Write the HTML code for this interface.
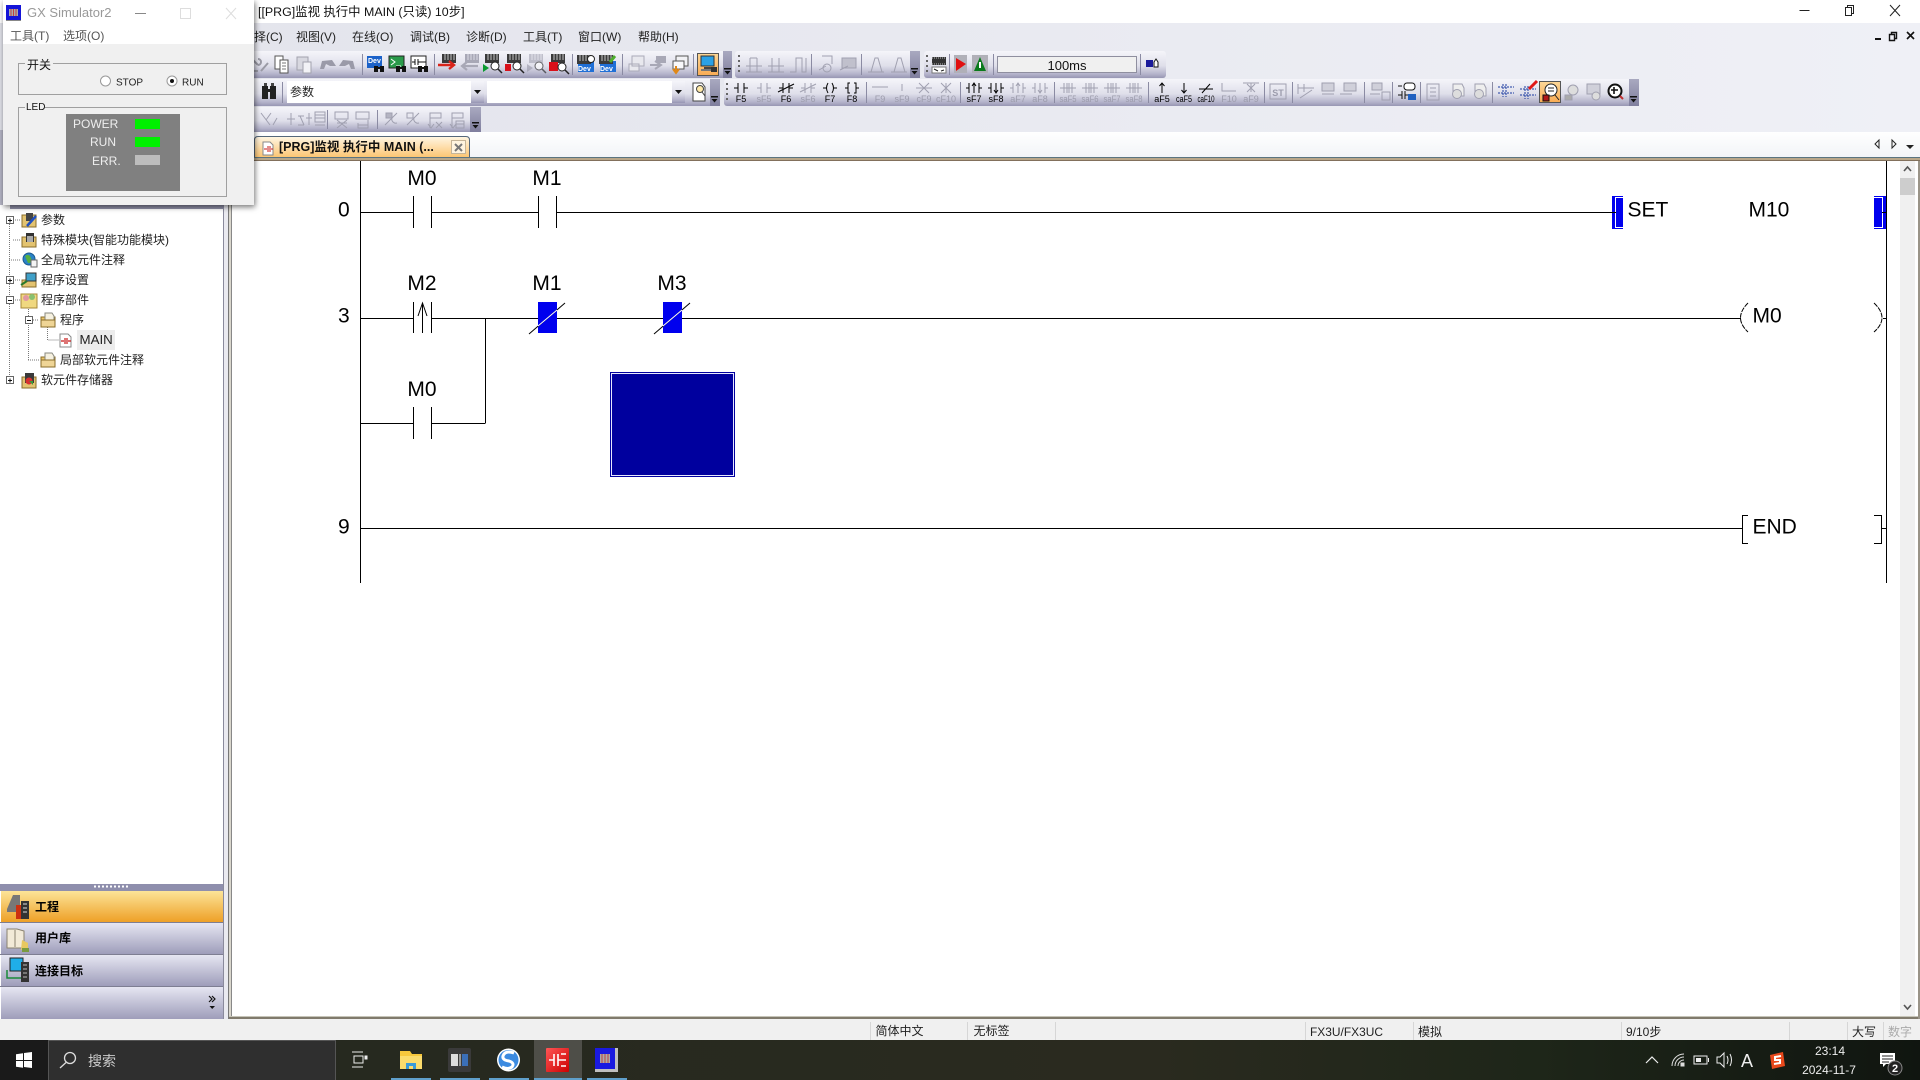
<!DOCTYPE html>
<html><head><meta charset="utf-8"><title>GX Works2</title>
<style>
html,body{margin:0;padding:0;width:1920px;height:1080px;overflow:hidden;background:#fff}
svg{display:block;font-family:"Liberation Sans","Noto Sans CJK SC",sans-serif}
.t{font-size:12px;fill:#222}
.lad{font-size:21px;fill:#000}
.k{stroke:#000;fill:none;stroke-width:1}
.g{stroke:#a0a0b0;fill:none;stroke-width:1}
.fk{font-size:9px;fill:#000;text-anchor:middle}
.fg{font-size:9px;fill:#9c9cac;text-anchor:middle}
.sep{stroke:#8b8ba3;stroke-width:1}
.ln{stroke:#000;stroke-width:1;fill:none;shape-rendering:crispEdges}
.st{font-size:12px;fill:#222}
.tree{font-size:12px;fill:#222}
.dot{stroke:#777;stroke-width:1;stroke-dasharray:1 1;fill:none;shape-rendering:crispEdges}
</style></head><body>
<svg width="1920" height="1080" viewBox="0 0 1920 1080" xmlns="http://www.w3.org/2000/svg">
<defs>
<linearGradient id="bg" x1="0" x2="1" y1="0" y2="0"><stop offset="0" stop-color="#e2e3eb"/><stop offset="1" stop-color="#eff0f6"/></linearGradient>
<linearGradient id="tb" x1="0" x2="0" y1="0" y2="1"><stop offset="0" stop-color="#f5f5fa"/><stop offset=".55" stop-color="#dfdfea"/><stop offset=".85" stop-color="#b5b4cb"/><stop offset="1" stop-color="#9796b3"/></linearGradient>
<linearGradient id="gr" x1="0" x2="0" y1="0" y2="1"><stop offset="0" stop-color="#a9a9c0"/><stop offset="1" stop-color="#7f7e9d"/></linearGradient>
<linearGradient id="strip" x1="0" x2="0" y1="0" y2="1"><stop offset="0" stop-color="#fff"/><stop offset="1" stop-color="#f2f4f7"/></linearGradient>
<linearGradient id="tab" x1="0" x2="0" y1="0" y2="1"><stop offset="0" stop-color="#fff6e4"/><stop offset="1" stop-color="#fcc674"/></linearGradient>
<linearGradient id="acc" x1="0" x2="0" y1="0" y2="1"><stop offset="0" stop-color="#e6e6f2"/><stop offset="1" stop-color="#9e9dba"/></linearGradient>
<linearGradient id="acco" x1="0" x2="0" y1="0" y2="1"><stop offset="0" stop-color="#fce498"/><stop offset="1" stop-color="#eea027"/></linearGradient>
<linearGradient id="hl" x1="0" x2="0" y1="0" y2="1"><stop offset="0" stop-color="#fcd797"/><stop offset="1" stop-color="#f9ab54"/></linearGradient>
<linearGradient id="task" x1="0" x2="1" y1="0" y2="0"><stop offset="0" stop-color="#1a1a1a"/><stop offset=".18" stop-color="#26291f"/><stop offset=".6" stop-color="#2a2a1f"/><stop offset=".8" stop-color="#1e2619"/><stop offset="1" stop-color="#101510"/></linearGradient>
<linearGradient id="red" x1="0" x2="1" y1="0" y2="1"><stop offset="0" stop-color="#f55"/><stop offset="1" stop-color="#c00"/></linearGradient>

<path id="ct" d="M-7 0H-3M-3-5V5M3-5V5M3 0H7"/>
<path id="nc" d="M-7 0H-3M-3-5V5M3-5V5M3 0H7M-8 4L8-4"/>
<path id="co" d="M-7 0H-4M-2-5Q-5 0-2 5M2-5Q5 0 2 5M4 0H7"/>
<path id="ap" d="M-7 0H-4M-2-5H-4V5H-2M2-5H4V5H2M4 0H7"/>
<path id="up" d="M-8 0H-5M-5-5V5M5-5V5M5 0H8M0 5V-5M-2-2L0-5L2-2"/>
<path id="dn" d="M-8 0H-5M-5-5V5M5-5V5M5 0H8M0-5V5M-2 2L0 5L2 2"/>
<path id="sa" d="M-8 0H8M-4-5V5M4-5V5M-1-5V5M1-5V5"/>
<g id="p"><rect x="-7" y="-8" width="14" height="9" fill="#3a3a3a"/><path d="M-4-8V-2M-1-8V-2M2-8V-2M5-8V-2" stroke="#c4c4c4" fill="none"/></g>
<g id="pg"><rect x="-7" y="-8" width="14" height="9" fill="#a8a8b6"/><path d="M-4-8V-2M-1-8V-2M2-8V-2M5-8V-2" stroke="#dcdce6" fill="none"/></g>
<g id="mg"><circle r="4" fill="#fff" stroke="#222"/><path d="M3 3L7 7" stroke="#222" stroke-width="1.5"/></g>
<g id="bn"><rect x="-5" y="1" width="4" height="6" fill="#111"/><rect x="1" y="1" width="4" height="6" fill="#111"/><rect x="-1" y="2" width="2" height="2" fill="#111"/></g>
<path id="wr" d="M-8-5l6 6M-2-5a3 3 0 0 1 0 6M1 7L8-1M-8 7h6"/>
<g id="fold"><path d="M-7-3H7V7H-7Z" fill="#e8c46a" stroke="#8a6d2a"/><path d="M-3-7H4L6-4V4H-3Z" fill="#f6f1e0" stroke="#8a8a80"/><path d="M-7 0H7V7H-7Z" fill="#efd596" stroke="#8a6d2a"/></g>
</defs>

<!-- top -->
<rect width="1920" height="1080" fill="#fff"/>
<rect x="0" y="23" width="1920" height="109" fill="url(#bg)"/>
<rect x="0" y="132" width="1920" height="25" fill="url(#strip)"/>
<text x="258" y="16" font-size="12.4" fill="#111">[[PRG]监视 执行中 MAIN (只读) 10步]</text>

<!-- window controls -->
<path d="M1799.5 10.5H1809.5" stroke="#222"/>
<path d="M1845.5 7.5H1851.5V15.5H1845.5ZM1847.5 7.5V5.5H1853.5V13.5H1851.5" stroke="#222" fill="none"/>
<path d="M1890 5L1900 16M1900 5L1890 16" stroke="#222" fill="none"/>
<rect x="1875" y="38" width="6" height="2" fill="#111"/>
<path d="M1889.5 34.5H1894.5V40.5H1889.5ZM1891.5 34.5V32.5H1896.5V38.5H1894.5" stroke="#111" fill="none" stroke-width="1.4"/>
<path d="M1907 32L1914 39M1914 32L1907 39" stroke="#111" stroke-width="1.6"/>

<!-- menu -->
<g class="t">
<text x="242" y="41">选择(C)</text><text x="296" y="41">视图(V)</text><text x="352" y="41">在线(O)</text><text x="410" y="41">调试(B)</text><text x="466" y="41">诊断(D)</text><text x="523" y="41">工具(T)</text><text x="578" y="41">窗口(W)</text><text x="638" y="41">帮助(H)</text>
</g>

<!-- toolbar backgrounds -->
<rect x="250" y="51" width="482" height="27" rx="3" fill="url(#tb)"/><rect x="723" y="51" width="9" height="27" fill="url(#gr)"/>
<rect x="735" y="51" width="185" height="27" rx="3" fill="url(#tb)"/><rect x="910" y="51" width="10" height="27" fill="url(#gr)"/>
<rect x="924" y="51" width="242" height="27" rx="3" fill="url(#tb)"/>
<rect x="250" y="79" width="470" height="27" rx="3" fill="url(#tb)"/><rect x="710" y="79" width="10" height="27" fill="url(#gr)"/>
<rect x="724" y="79" width="915" height="27" rx="3" fill="url(#tb)"/><rect x="1629" y="79" width="10" height="27" fill="url(#gr)"/>
<rect x="250" y="107" width="231" height="25" rx="3" fill="url(#tb)"/><rect x="470" y="107" width="11" height="25" fill="url(#gr)"/>

<!-- dropdown marks -->
<g fill="#111"><path d="M724 68h7v1.5h-7ZM724.5 71h6l-3 3.5Z"/><path d="M911 68h7v1.5h-7ZM911.5 71h6l-3 3.5Z"/><path d="M711 96h7v1.5h-7ZM711.5 99h6l-3 3.5Z"/><path d="M1630 96h7v1.5h-7ZM1630.5 99h6l-3 3.5Z"/><path d="M472 124h7v1.5h-7ZM472.5 127h6l-3 3.5Z" transform="translate(0,-2)"/></g>

<!-- row 1 icons -->
<g>
<use href="#wr" x="260" y="64" stroke="#9a9aa5" stroke-width="2" fill="none"/>
<g transform="translate(282,64)"><path d="M-7-8H1V5H-7Z" fill="#fff" stroke="#555"/><path d="M-2-4H6V9H-2Z" fill="#fff" stroke="#555"/><path d="M0-1H4M0 2H4M0 5H4" stroke="#777"/></g>
<g transform="translate(304,64)"><path d="M-7-7H4V6H-7Z" fill="#d8d8e0" stroke="#a2a2ae"/><path d="M-1-2H7V9H-1Z" fill="#f2f2f6" stroke="#a2a2ae"/></g>
<path d="M320 69L322 61L332 60L336 66L330 66L326 64L324 69Z" fill="#9a9aa8"/>
<path d="M355 69L353 61L343 60L339 66L345 66L349 64L351 69Z" fill="#9a9aa8"/>
<line x1="362.5" x2="362.5" y1="54" y2="75" class="sep"/>
<g transform="translate(376,64)"><rect x="-9" y="-8" width="15" height="12" fill="#1c62c9"/><text x="-8" y="-1" font-size="7" fill="#fff" font-weight="bold">Dev</text><use href="#bn" x="3" y="1"/></g>
<g transform="translate(398,64)"><rect x="-9" y="-8" width="15" height="12" fill="#2a9a4a" stroke="#222"/><path d="M-7-5L-3-2L-7 1M-2 2H3" stroke="#fff" fill="none"/><use href="#bn" x="3" y="1"/></g>
<g transform="translate(420,64)"><rect x="-9" y="-8" width="15" height="12" fill="#fff" stroke="#222"/><path d="M-8-2H-5M-5-5V1M-2-5V1M-2-2H6" stroke="#111" fill="none"/><use href="#bn" x="3" y="1"/></g>
<line x1="434.5" x2="434.5" y1="54" y2="75" class="sep"/>
<g transform="translate(449,62)"><use href="#p"/><path d="M-11 3H4M0-1L5 3L0 7" stroke="#d9241a" stroke-width="2.4" fill="none"/></g>
<g transform="translate(472,62)"><use href="#pg"/><path d="M6 4H-9M-5 0L-10 4L-5 8" stroke="#a8a8b6" stroke-width="2.2" fill="none"/></g>
<g transform="translate(492,62)"><use href="#p"/><path d="M-9 2L-3 6L-9 10Z" fill="#0a9a30"/><use href="#mg" x="3" y="4"/></g>
<g transform="translate(514,62)"><use href="#p"/><rect x="-9" y="2" width="6" height="7" fill="#d9101a"/><use href="#mg" x="3" y="4"/></g>
<g transform="translate(536,62)" opacity=".65"><use href="#pg"/><path d="M-9 2L-3 6L-9 10Z" fill="#9c9cac"/><use href="#mg" x="3" y="4"/></g>
<g transform="translate(558,62)"><use href="#p"/><rect x="-9" y="0" width="9" height="9" fill="#d9101a"/><use href="#mg" x="4" y="5"/></g>
<line x1="572.5" x2="572.5" y1="54" y2="75" class="sep"/>
<g transform="translate(586,62)"><rect x="-8" y="-1" width="16" height="11" fill="#1f6fd6"/><use href="#p" y="1" x="-2"/><circle cx="5" cy="-3" r="3.5" fill="#fff" stroke="#222"/><text x="-8" y="9" font-size="7" fill="#fff" font-weight="bold">Dev</text></g>
<g transform="translate(608,62)"><rect x="-8" y="-1" width="16" height="11" fill="#1f6fd6"/><use href="#p" y="1" x="-2"/><path d="M2 0L7-6" stroke="#4fae2e" stroke-width="3"/><text x="-8" y="9" font-size="7" fill="#fff" font-weight="bold">Dev</text></g>
<line x1="622.5" x2="622.5" y1="54" y2="75" class="sep"/>
<g transform="translate(637,64)" stroke="#aaaab8" fill="none"><path d="M-5-8H7V2H-5ZM-8 0H2V7H-8Z" fill="#e8e8ee"/></g>
<g transform="translate(658,64)"><rect x="-2" y="-8" width="10" height="7" fill="#a8a8b6"/><path d="M-8 1H2M-3-3L3 1L-3 5" stroke="#a8a8b6" stroke-width="2" fill="none"/></g>
<g transform="translate(680,64)"><path d="M-4-8H8V2H-4Z" fill="#f2f2f5" stroke="#555"/><path d="M-7-3H4V5H-7Z" fill="#f8f8fa" stroke="#555"/><path d="M-4 2V8M-7 5L-4 9L-1 5" stroke="#e08818" stroke-width="2" fill="none"/></g>
<line x1="693.5" x2="693.5" y1="54" y2="75" class="sep"/>
<rect x="697.5" y="53.5" width="21" height="22" fill="url(#hl)" stroke="#555"/>
<g transform="translate(708,64)"><rect x="-7" y="-8" width="13" height="10" fill="#2aa1e6" stroke="#333"/><rect x="-4" y="3" width="7" height="2" fill="#444"/><rect x="-7" y="5" width="13" height="2" fill="#777"/><rect x="3" y="3" width="6" height="5" fill="#333"/></g>
</g>

<!-- row1 tb2 -->
<g fill="#666"><rect x="738" y="55" width="2" height="2"/><rect x="738" y="60" width="2" height="2"/><rect x="738" y="65" width="2" height="2"/><rect x="738" y="70" width="2" height="2"/></g>
<g stroke="#a0a0b0" fill="none">
<path d="M746 72H762M750 72V58M757 72V58M750 58L757 58M746 66H762"/><path d="M768 72H784M772 72V58M779 72V58M768 66H784"/><path d="M790 72H796V58H802V72H806V58"/><path d="M822 56H832V64M819 70L826 66"/><circle cx="827" cy="68" r="4"/><rect x="842" y="58" width="14" height="10" fill="#c0c0cc"/><path d="M840 70L848 66"/><path d="M868 72H884M871 72L875 58H878L882 72"/><path d="M891 72H907M894 72L898 58H901L905 72"/>
</g>
<line x1="811.5" x2="811.5" y1="54" y2="75" class="sep"/><line x1="861.5" x2="861.5" y1="54" y2="75" class="sep"/>

<!-- row1 tb3 -->
<g fill="#666"><rect x="926" y="55" width="2" height="2"/><rect x="926" y="60" width="2" height="2"/><rect x="926" y="65" width="2" height="2"/><rect x="926" y="70" width="2" height="2"/></g>
<rect x="932" y="57" width="14" height="8" fill="#333"/><path d="M932 58H946M932 64H946" stroke="#bbb" stroke-dasharray="1 1"/><path d="M932 67H946V73H932Z" fill="#fff" stroke="#777"/><path d="M934 69L938 71M941 71L944 70" stroke="#222"/>
<line x1="949.5" x2="949.5" y1="54" y2="75" class="sep"/>
<rect x="954" y="55" width="13" height="18" fill="#b0b0b8"/><path d="M956 58L966 64L956 71Z" fill="#e01010"/>
<rect x="972" y="55" width="16" height="18" fill="#b0b0b8"/><path d="M980 57L986 71H974Z" fill="#0a7a1c"/><rect x="979" y="62" width="2" height="6" fill="#fff"/>
<line x1="993.5" x2="993.5" y1="54" y2="75" class="sep"/>
<rect x="997.5" y="56.5" width="139" height="16" fill="#f0f0f0" stroke="#8f8f9f"/>
<text x="1067" y="70" font-size="13" fill="#111" text-anchor="middle">100ms</text>
<line x1="1140.5" x2="1140.5" y1="54" y2="75" class="sep"/>
<rect x="1146" y="60" width="7" height="7" fill="#1a1a9a"/><path d="M1154 67V62l2-3 2 3v5Z" fill="#fff" stroke="#111"/>

<!-- row2 left -->
<g transform="translate(269,92)"><rect x="-7" y="-6" width="6" height="13" fill="#222"/><rect x="1" y="-6" width="6" height="13" fill="#222"/><rect x="-1" y="-3" width="2" height="3" fill="#222"/><rect x="-5" y="-9" width="3" height="3" fill="#444"/><rect x="2" y="-9" width="3" height="3" fill="#444"/></g>
<line x1="282.5" x2="282.5" y1="82" y2="103" class="sep"/>
<rect x="287" y="81" width="197" height="22" fill="#fff"/><rect x="471" y="81" width="13" height="22" fill="url(#tb)"/><path d="M474 90h7l-3.5 4Z" fill="#111"/>
<text x="290" y="96" class="t" font-size="12">参数</text>
<rect x="487" y="81" width="198" height="22" fill="#fff"/><rect x="672" y="81" width="13" height="22" fill="url(#tb)"/><path d="M675 90h7l-3.5 4Z" fill="#111"/>
<g transform="translate(699,92)"><path d="M-6-9H3L6-5V9H-6Z" fill="#fff" stroke="#444"/><circle cx="1" cy="-3" r="3.5" fill="#ffe9a8" stroke="#444"/><path d="M3 0L6 4" stroke="#444"/></g>

<!-- row2 f keys -->
<g fill="#666"><rect x="726" y="83" width="2" height="2"/><rect x="726" y="88" width="2" height="2"/><rect x="726" y="93" width="2" height="2"/><rect x="726" y="98" width="2" height="2"/></g>
<g class="k">
<use href="#ct" x="741" y="88"/><use href="#nc" x="786" y="88"/><use href="#co" x="830" y="88"/><use href="#ap" x="852" y="88"/>
<use href="#up" x="974" y="88"/><use href="#dn" x="996" y="88"/>
<path d="M1162 93V83M1159.5 86L1162 83L1164.5 86M1184 83V93M1181.5 90L1184 93L1186.5 90M1199 89H1213M1202 93L1210 84"/>
</g>
<g class="g">
<use href="#ct" x="764" y="88"/><use href="#nc" x="808" y="88"/>
<path d="M872 87H888M902 84V91M916 88H932M919 83L929 93M929 83L919 93M941 83L951 93M951 83L941 93M946 83V93"/>
<use href="#up" x="1018" y="88"/><use href="#dn" x="1040" y="88"/>
<use href="#sa" x="1068" y="88"/><use href="#sa" x="1090" y="88"/><use href="#sa" x="1112" y="88"/><use href="#sa" x="1134" y="88"/>
<path d="M1222 83V91H1236M1243 83H1259M1247 84L1255 92M1255 84L1247 92M1251 83V92"/>
<rect x="1270" y="84" width="16" height="15"/>
<path d="M1298 84V94M1304 84V92M1298 88H1314M1300 98L1312 90M1322 94H1334M1340 94H1352"/>
<rect x="1322" y="83" width="12" height="8" fill="#d0d0da"/><rect x="1344" y="83" width="12" height="8" fill="#d0d0da"/>
<rect x="1372" y="83" width="10" height="7" fill="#d0d0da"/><path d="M1370 94H1380M1382 92H1390V100H1382Z"/>
<path d="M1427 84H1439V100H1427ZM1430 88H1436M1430 92H1436M1430 96H1436"/>
<path d="M1453 84H1462L1464 88V96H1453Z" fill="#eee"/><path d="M1475 84H1484L1486 88V96H1475Z" fill="#eee"/>
<circle cx="1457" cy="94" r="4.5" fill="#ddd"/><circle cx="1479" cy="94" r="4.5" fill="#ddd"/>
<circle cx="1573" cy="90" r="5" fill="#ddd"/><path d="M1565 100V95H1572V100Z" fill="#aaa"/>
<rect x="1587" y="84" width="13" height="10" fill="#d0d0da"/><circle cx="1596" cy="96" r="4" fill="#ddd"/>
</g>
<g>
<text class="fk" x="741" y="102">F5</text><text class="fg" x="764" y="102">sF5</text><text class="fk" x="786" y="102">F6</text><text class="fg" x="808" y="102">sF6</text><text class="fk" x="830" y="102">F7</text><text class="fk" x="852" y="102">F8</text>
<text class="fg" x="880" y="102">F9</text><text class="fg" x="902" y="102">sF9</text><text class="fg" x="924" y="102">cF9</text><text class="fg" x="946" y="102">cF10</text>
<text class="fk" x="974" y="102">sF7</text><text class="fk" x="996" y="102">sF8</text><text class="fg" x="1018" y="102">aF7</text><text class="fg" x="1040" y="102">aF8</text>
<text class="fg" x="1068" y="102" textLength="17" lengthAdjust="spacingAndGlyphs">saF5</text><text class="fg" x="1090" y="102" textLength="17" lengthAdjust="spacingAndGlyphs">saF6</text><text class="fg" x="1112" y="102" textLength="17" lengthAdjust="spacingAndGlyphs">saF7</text><text class="fg" x="1134" y="102" textLength="17" lengthAdjust="spacingAndGlyphs">saF8</text>
<text class="fk" x="1162" y="102">aF5</text><text class="fk" x="1184" y="102" textLength="16" lengthAdjust="spacingAndGlyphs">caF5</text><text class="fk" x="1206" y="102" textLength="17" lengthAdjust="spacingAndGlyphs">caF10</text><text class="fg" x="1229" y="102">F10</text><text class="fg" x="1251" y="102">aF9</text>
<text x="1278" y="96" font-size="9" fill="#9c9cac" text-anchor="middle" font-weight="bold">ST</text>
</g>
<path d="M866.5 82V103M960.5 82V103M1054.5 82V103M1148.5 82V103M1264.5 82V103M1292.5 82V103M1364.5 82V103M1392.5 82V103M1420.5 82V103M1492.5 82V103" class="sep"/>
<g transform="translate(1406,92)"><rect x="-2" y="-9" width="11" height="7" rx="3" fill="#fff" stroke="#111"/><path d="M-8 3H-4M-4-1V7M-1-1V7M-1 3H2M-8-6H-4" stroke="#111" fill="none"/><rect x="2" y="2" width="8" height="6" fill="#2060c0"/></g>
<g stroke="#1a3aa0" fill="none" stroke-dasharray="2 1"><path d="M1498 87H1514M1498 93H1514M1503 84V90M1506 84V90M1503 90V97M1506 90V97"/><path d="M1520 89H1536M1520 95H1536M1525 86V92M1528 86V92M1525 92V99M1528 92V99"/></g>
<path d="M1529 89L1537 81" stroke="#e01818" stroke-width="3"/>
<rect x="1539.5" y="81.5" width="21" height="21" fill="url(#hl)" stroke="#555"/>
<circle cx="1551" cy="90" r="6" fill="#fff" stroke="#222"/><path d="M1548 88H1554M1548 91H1554M1555 95L1559 100" stroke="#222"/><rect x="1543" y="95" width="6" height="6" fill="#b01818" stroke="#111"/>
<circle cx="1615" cy="91" r="6.5" fill="#fff" stroke="#111" stroke-width="2"/><path d="M1611 90H1618M1614 87V94" stroke="#111" stroke-width="1.6"/><path d="M1620 96L1623 99" stroke="#c03030" stroke-width="2"/>

<!-- row3 -->
<g class="g">
<path d="M261 113L270 125M271 113L266 120M273 125L277 118M291 113V125M287 119H295M298 116H304M298 125H304M300 116L304 125"/>
<path d="M309 113V125M306 118H312M315 112H325V122H315ZM315 115H325M315 118H325M315 125H325"/>
<rect x="335" y="112" width="13" height="7"/><path d="M337 123H347M337 120L347 128M347 120L337 128"/>
<rect x="356" y="112" width="13" height="7"/><path d="M358 123V128H368V120M358 125H368"/>
<rect x="386" y="113" width="6" height="5" fill="#b4b4c2"/><path d="M385 125L397 113M392 118a4 4 0 0 0 5 5"/>
<rect x="407" y="113" width="6" height="5"/><path d="M407 125L419 113M414 118a4 4 0 0 0 5 5"/>
<path d="M430 113H441V118H430ZM430 113V128M428 124L431 128L434 124M436 122L442 128M442 122L436 128"/>
<path d="M452 113H463V118H452ZM452 113V128M450 124L453 128L456 124M456 121H464V128H456ZM456 124H464"/>
</g>
<path d="M327.5 110V129M377.5 110V129" class="sep"/>

<!-- tab -->
<path d="M254.5 157V140Q254.5 136.5 258 136.5H466Q469.5 136.5 469.5 140V157" fill="url(#tab)" stroke="#54677a"/>
<path d="M263 142H270L273 145V155H263Z" fill="#fff" stroke="#888"/><path d="M264 149H267M268 146V152M270 146V152M271 149H273" stroke="#c81818"/>
<text x="279" y="151" font-size="12.5" font-weight="bold" fill="#111">[PRG]监视 执行中 MAIN (...</text>
<rect x="451.5" y="140.5" width="14" height="13" fill="#fff4df" stroke="#c6b598"/><path d="M455 144L462 151M462 144L455 151" stroke="#777" stroke-width="2"/>
<path d="M1879 140V148L1875 144ZM1892 140V148L1896 144Z" fill="none" stroke="#222"/>
<path d="M1906 145H1914L1910 149Z" fill="#222"/>

<!-- status & below -->
<rect x="0" y="1019" width="1920" height="21" fill="#f0f0f0"/>

<!-- editor frame -->
<rect x="224" y="161" width="5" height="858" fill="#eaeaf0"/>
<rect x="229" y="157" width="1691" height="4" fill="#b8a688"/>
<rect x="229" y="157" width="1691" height="1" fill="#5a7480"/>
<rect x="229" y="160" width="1691" height="1" fill="#82705c"/>
<rect x="228" y="161" width="1" height="858" fill="#777"/>
<rect x="229" y="161" width="2" height="858" fill="#d9d6cc"/>
<rect x="231" y="161" width="1" height="855" fill="#888"/>
<rect x="229" y="1016" width="1691" height="1" fill="#c6c4b8"/>
<rect x="229" y="1017" width="1691" height="2" fill="#807a6c"/>
<rect x="1918" y="161" width="2" height="858" fill="#9a9488"/>
<rect x="1900" y="161" width="15" height="855" fill="#f0f0f0"/>
<rect x="1900" y="178" width="15" height="17" fill="#cdcdcd"/>
<path d="M1904 171L1907.5 167L1911 171" stroke="#555" stroke-width="1.6" fill="none"/>
<path d="M1904 1005L1907.5 1009L1911 1005" stroke="#555" stroke-width="1.6" fill="none"/>

<!-- ladder -->
<g>
<path class="ln" d="M360.5 161V583M1886.5 161V583"/>
<path class="ln" d="M360 212.5H413M431 212.5H538M556 212.5H1612M413.5 196V228M431.5 196V228M538.5 196V228M556.5 196V228"/>
<path class="ln" d="M360 318.5H413M431 318.5H538M557 318.5H663M682 318.5H1741M413.5 302V333M431.5 302V333M422.5 303V333M485.5 318V423.5M360 423.5H413M431 423.5H485M413.5 407V439M431.5 407V439"/>
<path d="M418 316L422.5 303L427 316" stroke="#000" fill="none"/>
<path class="ln" d="M360 528.5H1742M1748 515.5H1742.5V543.5H1748M1874 515.5H1881.5V543.5H1874M1881 528.5H1886"/>
<rect x="538" y="302" width="19" height="31" fill="#0000ee"/>
<path d="M529 334L565 303" stroke="#000" fill="none"/><path d="M538 326L557 310" stroke="#fff" fill="none"/>
<rect x="663" y="302" width="19" height="31" fill="#0000ee"/>
<path d="M654 334L690 303" stroke="#000" fill="none"/><path d="M663 326L682 310" stroke="#fff" fill="none"/>
<rect x="610" y="372" width="125" height="105" fill="#00009e"/>
<rect x="611.5" y="373.5" width="122" height="102" fill="none" stroke="#e8e8ff" shape-rendering="crispEdges"/>
<rect x="1612" y="196" width="11" height="33" fill="#0000ee"/>
<path d="M1623 197.5H1615.5V227.5H1623" stroke="#fff" fill="none" shape-rendering="crispEdges"/>
<path class="ln" d="M1612 212.5H1616"/>
<rect x="1874" y="196" width="12" height="33" fill="#0000ee"/>
<path d="M1874 197.5H1882.5V227.5H1874" stroke="#fff" fill="none" shape-rendering="crispEdges"/>
<path class="ln" d="M1882 212.5H1886"/>
<path d="M1748 303Q1733 318 1748 332" stroke="#000" fill="none" stroke-dasharray="5 1"/>
<path d="M1874 303Q1890 318 1874 332" stroke="#000" fill="none" stroke-dasharray="5 1"/>
<path class="ln" d="M1883 318.5H1886"/>
<g class="lad" text-anchor="middle">
<text x="422" y="185">M0</text><text x="547" y="185">M1</text>
<text x="422" y="290">M2</text><text x="547" y="290">M1</text><text x="672" y="290">M3</text>
<text x="422" y="396">M0</text>
</g>
<g class="lad">
<text x="338" y="216.500">0</text><text x="338" y="322.500">3</text><text x="338" y="533.500">9</text>
<text x="1627.500" y="216.500">SET</text><text x="1748.500" y="216.500">M10</text>
<text x="1752.500" y="322.500">M0</text><text x="1752.500" y="533.500">END</text>
</g>
</g>

<!-- left panel -->
<rect x="0" y="205" width="223" height="679" fill="#fff"/>
<rect x="223" y="161" width="1" height="858" fill="#8a8a9c"/>
<rect x="0" y="130" width="3" height="75" fill="#b6b6c6"/>
<rect x="10" y="205" width="214" height="4" fill="#9090a8"/>
<g class="tree">
<text x="41" y="224">参数</text>
<text x="41" y="244">特殊模块(智能功能模块)</text>
<text x="41" y="264">全局软元件注释</text>
<text x="41" y="284">程序设置</text>
<text x="41" y="304">程序部件</text>
<text x="60" y="324">程序</text>
<rect x="77" y="330" width="38" height="20" fill="#ececec"/>
<text x="79.500" y="344" font-size="13.300">MAIN</text>
<text x="60" y="364">局部软元件注释</text>
<text x="41" y="384">软元件存储器</text>
</g>
<path class="dot" d="M9.5 220V380M13 220H21M13 240H21M9 260H21M13 280H21M13 300H21M28.5 305V360M33 320H39M47.5 325V340H59M28 360H39"/>
<g fill="#fff" stroke="#666" shape-rendering="crispEdges">
<rect x="6.5" y="216.5" width="7" height="7"/><rect x="6.5" y="276.5" width="7" height="7"/><rect x="6.5" y="296.5" width="7" height="7"/><rect x="25.5" y="316.5" width="7" height="7"/><rect x="6.5" y="376.5" width="7" height="7"/>
</g>
<path d="M8 220.5H12M8 280.5H12M8 300.5H12M27 320.5H31M8 380.5H12M10 218.5V222.5M10 278.5V282.5M10 378.5V382.5" stroke="#111" shape-rendering="crispEdges"/>
<g>
<g transform="translate(29,220)"><rect x="-7" y="-5" width="14" height="12" fill="#e3c370" stroke="#8a6d2a"/><rect x="-3" y="-7" width="7" height="8" fill="#444"/><path d="M-2 6L7-4" stroke="#2050c0" stroke-width="2.5"/></g>
<g transform="translate(29,240)"><rect x="-7" y="-3" width="14" height="10" fill="#e3c370" stroke="#8a6d2a"/><rect x="-3" y="-7" width="8" height="9" fill="#333"/><rect x="-2" y="-4" width="6" height="6" fill="#aaa"/></g>
<g transform="translate(29,260)"><circle cy="-1" r="6" fill="#2a82c6" stroke="#1a5a90"/><path d="M-4-4Q0-7 2-2T-1 3Z" fill="#58b040"/><rect x="2" y="0" width="6" height="7" fill="#f4f4f4" stroke="#666"/></g>
<g transform="translate(29,280)"><rect x="-7" y="0" width="14" height="7" fill="#e3c370" stroke="#8a6d2a"/><rect x="-3" y="-7" width="10" height="8" fill="#40a0c8" stroke="#333"/><path d="M-8 5L-2 1" stroke="#2a7a2a" stroke-width="2"/></g>
<g transform="translate(29,300)"><rect x="-8" y="-6" width="16" height="14" fill="#f0d880" stroke="#a88a38"/><circle cx="-3" cy="-2" r="3" fill="#e098a0"/><circle cx="3" cy="-3" r="3" fill="#88c070"/></g>
<use href="#fold" x="48" y="320"/>
<use href="#fold" x="48" y="360"/>
<g transform="translate(66,340)"><path d="M-6-6H2L5-3V7H-6Z" fill="#fff" stroke="#888"/><path d="M-5 1H-2M-1-2V4M1-2V4M2 1H5" stroke="#c81818" stroke-width="1.2"/></g>
<g transform="translate(29,380)"><rect x="-7" y="-3" width="14" height="11" fill="#e3c370" stroke="#8a6d2a"/><rect x="-4" y="-7" width="9" height="10" fill="#3a3a3a"/><circle cx="0" cy="1" r="3.5" fill="#d83030"/><path d="M0 1H4V5" fill="#3a9a3a"/></g>
</g>

<!-- accordion -->
<rect x="0" y="884" width="223" height="7" fill="#8f8fad"/>
<path d="M94 886.5H129" stroke="#fff" stroke-width="2" stroke-dasharray="2 2"/>
<rect x="1" y="891" width="222" height="31" fill="url(#acco)"/><rect x="0" y="922" width="223" height="1" fill="#7e7e92"/>
<rect x="1" y="923" width="222" height="31" fill="url(#acc)"/><rect x="0" y="954" width="223" height="1" fill="#7e7e92"/>
<rect x="1" y="955" width="222" height="31" fill="url(#acc)"/><rect x="0" y="986" width="223" height="1" fill="#7e7e92"/>
<rect x="1" y="987" width="222" height="32" fill="url(#acc)"/>
<g>
<path d="M7 909L13 895H20V912H7Z" fill="#777"/><rect x="16" y="905" width="5" height="14" fill="#cc3010"/><rect x="21" y="901" width="8" height="18" fill="#333"/><path d="M23 904H27M23 908H27M23 912H27" stroke="#ddd"/>
<path d="M7 929H17L24 931V948H7Z" fill="#f2ead8" stroke="#8a8270"/><path d="M15 930V947" stroke="#8a8270"/><path d="M22 940L28 943V950H21Z" fill="#e8c860"/><rect x="22" y="948" width="7" height="4" fill="#7a9a40"/>
<rect x="10" y="958" width="13" height="13" fill="#1faee8" stroke="#222"/><path d="M7 970V978H22" stroke="#1a8a3a" stroke-width="1.5" fill="none"/><rect x="21" y="962" width="8" height="20" fill="#333"/><path d="M23 965H27M23 969H27M23 973H27M23 977H27" stroke="#bbb"/>
</g>
<g font-size="12" fill="#000" font-weight="bold"><text x="35" y="911">工程</text><text x="35" y="942">用户库</text><text x="35" y="975">连接目标</text></g>
<path d="M209 996L212 999L209 1002M212 996L215 999L212 1002" stroke="#111" stroke-width="1.2" fill="none"/><path d="M209.500 1006H215L212.200 1009Z" fill="#111"/>

<!-- status text -->
<g class="st">
<text x="875.500" y="1035">简体中文</text><text x="973.500" y="1035">无标签</text>
<text x="1310" y="1036" textLength="73" lengthAdjust="spacingAndGlyphs">FX3U/FX3UC</text><text x="1418" y="1036">模拟</text><text x="1626" y="1036">9/10步</text><text x="1852" y="1036">大写</text><text x="1888" y="1036" style="fill:#aaa">数字</text>
</g>
<path d="M870.5 1022V1040M967.5 1022V1040M1055.500 1022V1040M1305.5 1022V1040M1413.5 1022V1040M1621.5 1022V1040M1789.5 1022V1040M1847.5 1022V1040M1883.5 1022V1040" stroke="#d6d6d6"/>

<!-- taskbar -->
<rect x="0" y="1040" width="1920" height="40" fill="url(#task)"/>
<rect x="0" y="1040" width="48" height="40" fill="#1a1a1a"/>
<rect x="48" y="1040" width="288" height="40" fill="#2f2f2f"/>
<path d="M48.500 1040V1080M335.500 1040V1080M48 1040.500H336" stroke="#555"/>
<path d="M16 1054.200L23 1053.200V1060H16ZM24 1053L32 1052V1060H24ZM16 1061H23V1067.800L16 1066.800ZM24 1061H32V1068L24 1067Z" fill="#fff"/>
<circle cx="70" cy="1058" r="5.500" fill="none" stroke="#ddd" stroke-width="1.300"/><path d="M66 1062.500L60 1068" stroke="#ddd" stroke-width="1.300"/>
<text x="88" y="1066" font-size="14" fill="#ccc">搜索</text>
<g stroke="#eee" fill="none"><path d="M352 1052H363M352 1067H363M354 1056H363V1063H354Z"/><rect x="365" y="1056" width="2" height="3" fill="#eee"/></g>
<rect x="534" y="1040" width="48" height="40" fill="#4e4e48"/>
<path d="M400 1051H410L412 1054H422V1069H400Z" fill="#f7c83c"/><path d="M400 1056H422V1069H400Z" fill="#fbdc6c"/><path d="M406 1069V1063H416V1069H413V1066H409V1069Z" fill="#3a9bd8"/>
<rect x="448" y="1048" width="23" height="24" rx="2" fill="#3a3a3a"/><rect x="451" y="1054" width="7" height="12" fill="#ddd"/><rect x="459" y="1054" width="2" height="12" fill="#999"/><rect x="462" y="1054" width="6" height="12" fill="#3b6fb8"/>
<circle cx="508.500" cy="1060" r="11.500" fill="#fff"/><circle cx="508.500" cy="1060" r="10" fill="#3b8ae0"/><path d="M514 1053Q505 1050 503 1056Q502 1060 509 1061Q515 1063 512 1067Q508 1070 502 1067" stroke="#fff" stroke-width="3" fill="none"/>
<rect x="546" y="1048" width="23" height="24" rx="1" fill="url(#red)"/><path d="M549 1060H554M554 1054V1066M558 1054V1066M558 1060H566M561 1054H566M561 1066H566" stroke="#fff" stroke-width="1.600" fill="none"/>
<rect x="595" y="1048" width="23" height="24" fill="#c0c0c0"/><rect x="595" y="1048" width="20" height="21" fill="#1a1ae0"/><rect x="600" y="1054" width="10" height="9" fill="#aaa"/><path d="M602 1054V1063M605 1054V1063M608 1054V1063" stroke="#c04040"/>
<g fill="#5f9fcb"><rect x="391" y="1078" width="40" height="2"/><rect x="440" y="1078" width="40" height="2"/><rect x="489" y="1078" width="40" height="2"/><rect x="534" y="1078" width="48" height="2"/><rect x="587" y="1078" width="40" height="2"/></g>

<!-- tray -->
<path d="M1646 1063L1652 1057L1658 1063" stroke="#eee" fill="none" stroke-width="1.200"/>
<g stroke="#ddd" fill="none"><path d="M1672 1066A12 12 0 0 1 1684 1054M1675 1066A9 9 0 0 1 1684 1057M1678 1066A6 6 0 0 1 1684 1060"/><rect x="1681" y="1063" width="3" height="3" fill="#ddd"/></g>
<rect x="1694" y="1056" width="13" height="8" fill="none" stroke="#eee"/><rect x="1696" y="1058" width="5" height="4" fill="#eee"/><rect x="1708" y="1058" width="1" height="4" fill="#eee"/>
<path d="M1717 1057H1720L1724 1053V1067L1720 1063H1717ZM1727 1056Q1729 1060 1727 1064M1730 1054Q1733 1060 1730 1066" stroke="#eee" fill="none"/>
<text x="1747" y="1067" font-size="18" fill="#eee" text-anchor="middle">A</text>
<path d="M1770 1055L1783 1052L1785 1066L1772 1069Z" fill="#e8491c"/><path d="M1781 1056L1775 1057L1775 1060L1780 1060L1780 1063L1774 1064" stroke="#fff" stroke-width="2" fill="none"/>
<g font-size="12" fill="#eee" text-anchor="middle"><text x="1830" y="1055">23:14</text><text x="1829" y="1074">2024-11-7</text></g>
<path d="M1880 1053H1895V1064H1886L1883 1067V1064H1880Z" fill="#fff"/><path d="M1882 1056H1893M1882 1059H1893M1882 1062H1889" stroke="#222"/>
<circle cx="1895" cy="1068" r="7" fill="#222" stroke="#888"/><text x="1895" y="1072" font-size="11" font-weight="bold" fill="#fff" text-anchor="middle">2</text>

<!-- simulator window -->
<g style="filter:drop-shadow(1px 2px 3px rgba(0,0,0,.55))">
<rect x="3" y="0" width="251" height="205" fill="#f0f0f0"/>
<rect x="3" y="0" width="251" height="44" fill="#fff"/>
</g>
<rect x="6" y="5" width="15" height="15" fill="#1414d8"/><rect x="9" y="9" width="9" height="7" fill="#aaa"/><path d="M11 9V16M13.500 9V16M16 9V16" stroke="#c04040"/><path d="M6 20.500H21" stroke="#888"/>
<text x="27" y="17" font-size="13" fill="#999">GX Simulator2</text>
<path d="M135 13.500H146" stroke="#888"/>
<rect x="180.500" y="8.500" width="10" height="10" fill="none" stroke="#ddd"/>
<path d="M226 8L236 19M236 8L226 19" stroke="#ddd"/>
<text x="10" y="40" font-size="12" fill="#555">工具(T)</text><text x="63" y="40" font-size="12" fill="#555">选项(O)</text>
<path d="M18.500 63.500H226.500V94.500H18.500ZM18.500 107.500H226.500V196.500H18.500Z" fill="none" stroke="#a0a0a0" shape-rendering="crispEdges"/>
<rect x="25" y="58" width="28" height="12" fill="#f0f0f0"/><rect x="25" y="102" width="20" height="10" fill="#f0f0f0"/>
<text x="27" y="69" font-size="12" fill="#111">开关</text>
<text x="26" y="110" font-size="10" fill="#111">LED</text>
<circle cx="105.500" cy="81" r="5" fill="#fff" stroke="#999"/><text x="116" y="85.500" font-size="10" fill="#222">STOP</text>
<circle cx="172" cy="81" r="5" fill="#fff" stroke="#999"/><circle cx="172" cy="81" r="2" fill="#111"/><text x="182" y="85.500" font-size="10" fill="#222">RUN</text>
<rect x="66" y="114" width="114" height="77" fill="#808080"/>
<g font-size="12" fill="#eee"><text x="73" y="128">POWER</text><text x="90" y="146">RUN</text><text x="92" y="165">ERR.</text></g>
<rect x="135" y="119" width="25" height="10" fill="#00f000"/><rect x="135" y="137" width="25" height="10" fill="#00f000"/><rect x="135" y="155" width="25" height="10" fill="#bdbdbd"/>
</svg>
</body></html>
